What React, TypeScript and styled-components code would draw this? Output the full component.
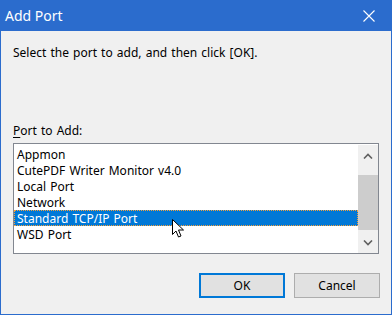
import React from "react";
import styled, { createGlobalStyle } from "styled-components";

const GlobalStyle = createGlobalStyle`
  html, body {
    margin: 0;
    padding: 0;
    background: #f0f0f0;
  }
  * {
    box-sizing: border-box;
  }
`;

const DialogWindow = styled.div`
  position: relative;
  width: 392px;
  height: 315px;
  display: flex;
  flex-direction: column;
  border: 1px solid #2b6ccd;
  border-top: none;
  background: #f0f0f0;
  font-family: "Noto Sans", "Open Sans", sans-serif;
  font-size: 12px;
  word-spacing: 1px;
  color: #000;
  overflow: hidden;
`;

const TitleBar = styled.div`
  height: 31px;
  flex: none;
  display: flex;
  align-items: center;
  justify-content: space-between;
  background: #2b6ccd;
  color: #fff;
  padding-left: 4px;
`;

const TitleText = styled.span`
  font-size: 14px;
  line-height: 31px;
  word-spacing: 0;
`;

const CloseButton = styled.div`
  width: 46px;
  height: 31px;
  display: flex;
  align-items: center;
  justify-content: center;
  margin-right: -1px;
`;

const Body = styled.div`
  flex: 1;
  display: flex;
  flex-direction: column;
  padding: 14px 11px 0 12px;
`;

const Prompt = styled.div`
  line-height: 16px;
  margin-bottom: 62px;
`;

const FieldLabel = styled.div`
  line-height: 16px;
  margin-bottom: 4px;
`;

const Mnemonic = styled.span`
  text-decoration: underline;
  text-underline-offset: 2px;
`;

const ListBox = styled.div`
  width: 366px;
  height: 111px;
  display: flex;
  border: 1px solid #828790;
  background: #fff;
`;

const ListItems = styled.div`
  flex: 1;
  padding-top: 2px;
`;

const ListRow = styled.div<{ $selected?: boolean }>`
  height: 16px;
  line-height: 15px;
  padding-left: 2px;
  white-space: nowrap;
  background: ${(p) => (p.$selected ? "#0078d7" : "transparent")};
  color: ${(p) => (p.$selected ? "#fff" : "#000")};
  border: 1px dotted ${(p) => (p.$selected ? "#f7a13a" : "transparent")};
`;

const ScrollBar = styled.div`
  width: 20px;
  margin-top: 1px;
  display: flex;
  flex-direction: column;
  background: #f0f0f0;
`;

const ScrollArrow = styled.div`
  height: 21px;
  display: flex;
  align-items: center;
  justify-content: center;
  flex: none;
`;

const ScrollTrack = styled.div`
  flex: 1;
  display: flex;
  flex-direction: column;
  padding-top: 9px;
`;

const ScrollThumb = styled.div`
  height: 55px;
  background: #cdcdcd;
`;

const ButtonRow = styled.div`
  display: flex;
  justify-content: flex-end;
  gap: 9px;
  margin-top: 19px;
`;

const DialogButton = styled.div<{ $default?: boolean }>`
  width: 86px;
  height: 25px;
  display: flex;
  align-items: center;
  justify-content: center;
  background: #e1e1e1;
  border: ${(p) => (p.$default ? "2px solid #0078d7" : "1px solid #adadad")};
`;

const Cursor = styled.svg`
  position: absolute;
  left: 171px;
  top: 219px;
`;

const ports = [
  "Appmon",
  "CutePDF Writer Monitor v4.0",
  "Local Port",
  "Network",
  "Standard TCP/IP Port",
  "WSD Port",
];

const App: React.FC = () => {
  return (
    <>
      <GlobalStyle />
      <DialogWindow>
        <TitleBar>
          <TitleText>Add Port</TitleText>
          <CloseButton>
            <svg width="12" height="12" viewBox="0 0 12 12">
              <path d="M0.5 0.5 L11.5 11.5 M11.5 0.5 L0.5 11.5" stroke="#fff" strokeWidth="1.1" />
            </svg>
          </CloseButton>
        </TitleBar>
        <Body>
          <Prompt>Select the port to add, and then click [OK].</Prompt>
          <FieldLabel>
            <Mnemonic>P</Mnemonic>ort to Add:
          </FieldLabel>
          <ListBox>
            <ListItems>
              {ports.map((port) => (
                <ListRow key={port} $selected={port === "Standard TCP/IP Port"}>
                  {port}
                </ListRow>
              ))}
            </ListItems>
            <ScrollBar>
              <ScrollArrow>
                <svg width="10" height="6" viewBox="0 0 10 6">
                  <path d="M1 5.5 L5 1.5 L9 5.5" fill="none" stroke="#606060" strokeWidth="1.6" />
                </svg>
              </ScrollArrow>
              <ScrollTrack>
                <ScrollThumb />
              </ScrollTrack>
              <ScrollArrow>
                <svg width="10" height="6" viewBox="0 0 10 6">
                  <path d="M1 0.5 L5 4.5 L9 0.5" fill="none" stroke="#606060" strokeWidth="1.6" />
                </svg>
              </ScrollArrow>
            </ScrollBar>
          </ListBox>
          <ButtonRow>
            <DialogButton $default>OK</DialogButton>
            <DialogButton>Cancel</DialogButton>
          </ButtonRow>
        </Body>
        <Cursor width="13" height="20" viewBox="0 0 13 20">
          <path
            d="M0.5 0.5 L0.5 15.5 L4 12 L6.5 18 L9 17 L6.5 11 L11.5 11 Z"
            fill="#fff"
            stroke="#000"
            strokeWidth="1"
          />
        </Cursor>
      </DialogWindow>
    </>
  );
};

export default App;
